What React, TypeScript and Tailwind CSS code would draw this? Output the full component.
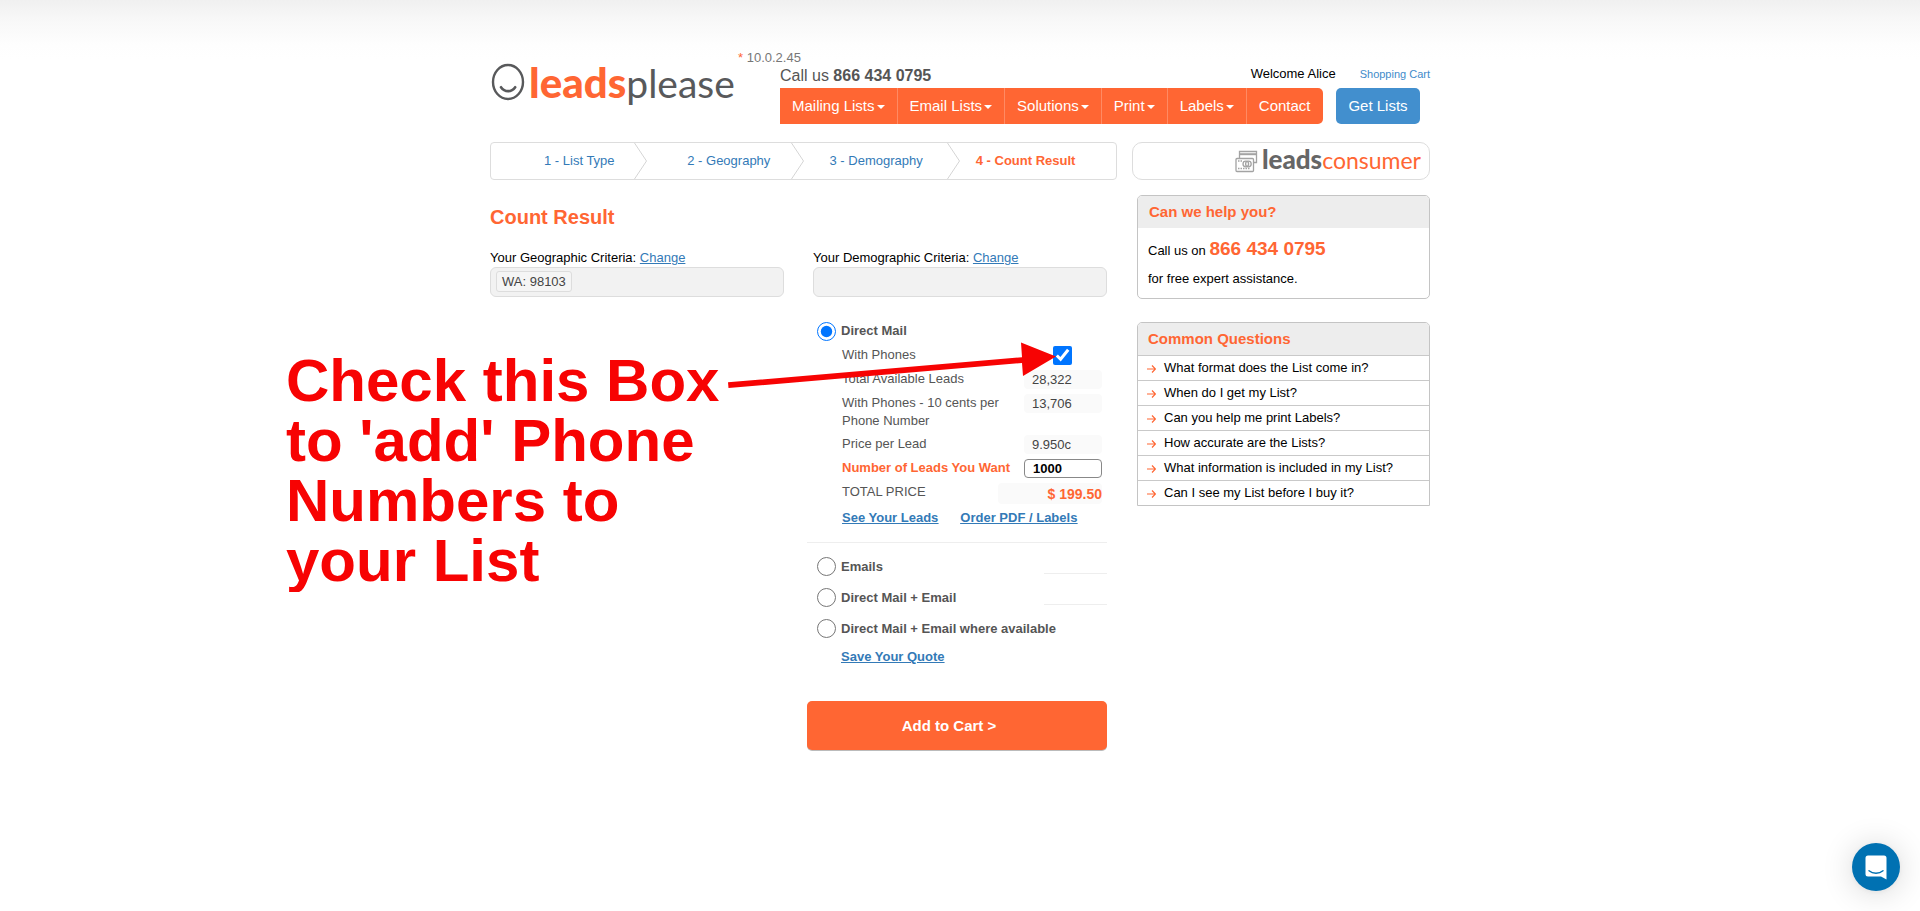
import type { ReactNode } from 'react';

const menu = [
  { label: 'Mailing Lists', caret: true },
  { label: 'Email Lists', caret: true },
  { label: 'Solutions', caret: true },
  { label: 'Print', caret: true },
  { label: 'Labels', caret: true },
  { label: 'Contact', caret: false },
];

const steps = [
  { label: '1 - List Type', pad: 'pl-[53px]' },
  { label: '2 - Geography', pad: 'pl-10' },
  { label: '3 - Demography', pad: 'pl-[26px]' },
  { label: '4 - Count Result', pad: 'pl-4' },
];

const questions = [
  'What format does the List come in?',
  'When do I get my List?',
  'Can you help me print Labels?',
  'How accurate are the Lists?',
  'What information is included in my List?',
  'Can I see my List before I buy it?',
];

const otherLists = [
  { id: 'emails', label: 'Emails', line: true },
  { id: 'mail-email', label: 'Direct Mail + Email', line: true },
  { id: 'mail-email-available', label: 'Direct Mail + Email where available', line: false },
];

function Logo() {
  return (
    <a href="#" className="flex h-[50px] items-start pl-px text-[#58595b]">
      <svg width="34" height="40" viewBox="0 0 34 40" fill="none" stroke="currentColor" className="mt-[5px]">
        <ellipse cx="17" cy="20" rx="15" ry="17" strokeWidth="2.4" />
        <path d="M10 25.2c3.6 5.2 10.6 5.2 14.2 0" strokeWidth="2.6" strokeLinecap="round" />
      </svg>
      <span className="pl-1 font-[Lato,sans-serif] leading-[50px]">
        <span className="text-[42px] font-black text-[#ff6633]">leads</span>
        <span className="text-[39px]">please</span>
      </span>
    </a>
  );
}

function ConsumerLogo() {
  return (
    <div className="flex h-[38px] items-center justify-end rounded-[10px] border border-[#ddd] pr-2">
      <svg width="23" height="23" viewBox="0 0 23 23" fill="none" stroke="#a3a3a3" strokeWidth="1.3">
        <path d="M4.500 8V1.500h17v11h-3" />
        <path d="M5 4.200h16" strokeWidth="2" />
        <rect x="1" y="8.500" width="17.500" height="13" rx="1" fill="#fff" />
        <circle cx="10.800" cy="14" r="2.800" />
        <circle cx="13.400" cy="14" r="2.800" />
        <path d="M3 11h4M3 18.500h12" strokeDasharray="1.500 1" />
      </svg>
      <span className="pl-1 font-[Lato,sans-serif] leading-9">
        <span className="text-[26px] font-black text-[#666]">leads</span>
        <span className="text-[23px] text-[#ff6633]">consumer</span>
      </span>
    </div>
  );
}

function Row({ label, children }: { label: string; children: ReactNode }) {
  return (
    <div className="flex h-6 items-start justify-between leading-6">
      <span>{label}</span>
      {children}
    </div>
  );
}

function Value({ children }: { children: ReactNode }) {
  return (
    <span className="mt-[3px] h-[19px] w-[78px] shrink-0 rounded bg-[#fafafa] pl-2 leading-[20px] text-[#444]">
      {children}
    </span>
  );
}

function Criteria({ title, children }: { title: string; children?: ReactNode }) {
  return (
    <div>
      <p className="text-black">
        {title}{' '}
        <a href="#" className="text-[#337ab7] underline">
          Change
        </a>
      </p>
      <div className="flex h-[30px] items-start rounded-md border border-[#ddd] bg-[#f2f2f2] px-[5px] pt-[3px]">
        {children}
      </div>
    </div>
  );
}

export default function App() {
  return (
    <div className="min-h-screen bg-white bg-[linear-gradient(#f0f0f0,#f7f7f7_18px,#fefefe_45px,#fff_60px)] font-['Liberation_Sans',Arial,sans-serif] text-[13px] leading-[18px]">
      <div className="relative mx-auto w-full max-w-[940px]">
        <header className="flex">
          <div className="w-[248px] shrink-0 pt-[57px]">
            <Logo />
          </div>
          <div className="flex-1 pt-[50px]">
            <p className="leading-4 text-[#777]">
              <span className="text-[#ff6633]">*</span> 10.0.2.45
            </p>
            <div className="flex h-[22px] items-start pl-[42px] leading-4">
              <p className="mr-auto text-base leading-5 text-[#555]">
                Call us <b>866 434 0795</b>
              </p>
              <span className="text-black">Welcome Alice</span>
              <a href="#" className="ml-6 text-[11px] text-[#428bca]">
                Shopping Cart
              </a>
            </div>
            <div className="flex items-center justify-between pr-2.5 pl-[42px] text-[15px] text-white">
              <nav className="flex h-9 overflow-hidden rounded-r-[5px] bg-[#ff6633]">
                {menu.map((item) => (
                  <a
                    key={item.label}
                    href="#"
                    className="flex items-center gap-0.5 border-r border-[#ff8a63] px-3 last:border-0"
                  >
                    {item.label}
                    {item.caret && (
                      <svg width="8" height="4" viewBox="0 0 8 4" fill="currentColor" className="mt-0.5">
                        <path d="M0 0h8L4 4z" />
                      </svg>
                    )}
                  </a>
                ))}
              </nav>
              <button type="button" className="h-9 w-[84px] rounded-[5px] bg-[#428fce]">
                Get Lists
              </button>
            </div>
          </div>
        </header>

        <div className="mt-[18px] flex gap-[15px]">
          <main className="flex-1">
            <ol className="grid h-[38px] grid-cols-4 rounded-sm border border-[#ddd] text-[#337ab7]">
              {steps.map((step, i) => (
                <li key={step.label} className={`flex items-center justify-between ${step.pad}`}>
                  {i < 3 ? (
                    <>
                      <a href="#">{step.label}</a>
                      <svg width="13" height="36" viewBox="0 0 13 36" fill="none" stroke="#d5d5d5">
                        <path d="M.5 0l12 18-12 18" />
                      </svg>
                    </>
                  ) : (
                    <b className="text-[#ff6633]">{step.label}</b>
                  )}
                </li>
              ))}
            </ol>

            <h1 className="mt-[23px] text-xl leading-7 font-bold text-[#ff6633]">Count Result</h1>

            <div className="mt-[18px] grid grid-cols-2 gap-x-[29px] pr-2.5">
              <Criteria title="Your Geographic Criteria:">
                <span className="h-[21px] rounded-[3px] border border-[#ddd] bg-[#f5f5f5] px-[5px] leading-[20px] text-[#444]">
                  WA: 98103
                </span>
              </Criteria>
              <Criteria title="Your Demographic Criteria:" />

              <form className="col-start-2 mt-[22px] -ml-1.5 text-[#555]">
                <div className="flex h-6 items-start pl-2.5">
                  <input
                    id="direct-mail"
                    type="radio"
                    name="list"
                    defaultChecked
                    className="mt-[3px] size-[19px] accent-[#0075ff]"
                  />
                  <label htmlFor="direct-mail" className="pl-[5px] leading-6 font-bold">
                    Direct Mail
                  </label>
                </div>
                <div className="pr-[5px] pl-[35px]">
                  <div className="flex h-6 items-start justify-between leading-6">
                    <label htmlFor="phones">With Phones</label>
                    <input
                      id="phones"
                      type="checkbox"
                      defaultChecked
                      className="mt-[3px] mr-[30px] size-[19px] accent-[#0075ff]"
                    />
                  </div>
                  <Row label="Total Available Leads">
                    <Value>28,322</Value>
                  </Row>
                  <div className="flex h-[41px] items-start justify-between">
                    <span className="w-[165px] pt-[3px]">With Phones - 10 cents per Phone Number</span>
                    <Value>13,706</Value>
                  </div>
                  <Row label="Price per Lead">
                    <Value>9.950c</Value>
                  </Row>
                  <div className="flex h-6 items-start justify-between leading-6">
                    <label htmlFor="count" className="font-bold text-[#ff6633]">
                      Number of Leads You Want
                    </label>
                    <input
                      id="count"
                      type="text"
                      defaultValue="1000"
                      className="mt-[3px] h-[19px] w-[78px] rounded border border-[#888] bg-white pl-2 font-bold text-black"
                    />
                  </div>
                  <div className="flex h-[26px] items-start justify-between leading-6">
                    <span>TOTAL PRICE</span>
                    <b className="mt-[3px] h-[21px] w-[104px] rounded bg-[#fafafa] text-right text-sm leading-[22px] text-[#ff6633]">
                      $ 199.50
                    </b>
                  </div>
                  <div className="flex gap-[22px] pb-3 leading-6 font-bold text-[#337ab7] underline">
                    <a href="#">See Your Leads</a>
                    <a href="#">Order PDF / Labels</a>
                  </div>
                </div>
                <div className="border-t border-[#eee] pt-2">
                  {otherLists.map((item) => (
                    <div key={item.id} className="flex h-[31px] items-center pl-2.5">
                      <input id={item.id} type="radio" name="list" className="size-[19px]" />
                      <label htmlFor={item.id} className="pl-[5px] font-bold">
                        {item.label}
                      </label>
                      {item.line && (
                        <span className="ml-auto h-[23px] w-[63px] self-start border-b border-[#eee]" />
                      )}
                    </div>
                  ))}
                  <p className="pl-[34px] leading-[26px] font-bold">
                    <a href="#" className="text-[#337ab7] underline">
                      Save Your Quote
                    </a>
                  </p>
                </div>
                <button
                  type="button"
                  className="mt-[31px] h-[49px] w-full rounded-[5px] bg-[#ff6633] pr-4 text-[15px] font-bold text-white shadow-[0_1px_0_#bbb]"
                >
                  Add to Cart &gt;
                </button>
              </form>
            </div>
          </main>

          <aside className="w-[298px] shrink-0 text-black">
            <ConsumerLogo />
            <section className="mt-[15px] ml-[5px] h-[104px] overflow-hidden rounded-[5px] border border-[#c4c4c4]">
              <h2 className="bg-[#ededed] px-[11px] text-[15px] leading-8 font-bold text-[#ff6633]">
                Can we help you?
              </h2>
              <p className="px-2.5 pt-[7px] leading-7">
                Call us on <b className="text-[19px] text-[#ff6633]">866 434 0795</b>
                <br />
                for free expert assistance.
              </p>
            </section>
            <section className="mt-[23px] ml-[5px] overflow-hidden rounded-t-[5px] border border-[#c4c4c4]">
              <h2 className="bg-[#ededed] px-2.5 text-[15px] leading-8 font-bold text-[#ff6633]">
                Common Questions
              </h2>
              <ul>
                {questions.map((q) => (
                  <li key={q} className="border-t border-[#c9c9c9]">
                    <a href="#" className="flex h-6 items-center gap-2 pl-[9px]">
                      <svg width="9" height="9" viewBox="0 0 9 9" fill="none" stroke="#ff6633" strokeWidth="1.2">
                        <path d="M0 5h8.500M5 1.500L8.500 5 5 8.500" />
                      </svg>
                      {q}
                    </a>
                  </li>
                ))}
              </ul>
            </section>
          </aside>
        </div>

        {/* callout drawn over the form */}
        <p className="absolute top-[351px] -left-[204px] h-[241px] overflow-hidden text-[60px] leading-[60px] font-bold whitespace-nowrap text-[#f70303]">
          Check this Box
          <br />
          to 'add' Phone
          <br />
          Numbers to
          <br />
          your List
        </p>
        <svg
          width="330"
          height="50"
          viewBox="0 0 330 50"
          fill="#f70303"
          className="pointer-events-none absolute top-[342px] left-[238px]"
        >
          <path d="M0 40.300L294 15.200 293 .5 328 14.500 295 34l-1-13L.5 46z" />
        </svg>
      </div>

      <button
        type="button"
        aria-label="Open chat"
        className="fixed right-5 bottom-5 flex size-12 items-center justify-center rounded-full bg-[#0071b2] shadow-[0_1px_6px_rgba(0,0,0,0.06),0_2px_32px_rgba(0,0,0,0.16)]"
      >
        <svg width="22" height="25" viewBox="0 0 22 25" fill="none">
          <path d="M3 .5h16a2.500 2.500 0 0 1 2.500 2.500v21.500l-5.500-3H3A2.500 2.500 0 0 1 .5 19V3A2.500 2.500 0 0 1 3 .5z" fill="#fff" />
          <path d="M4 15.700c4 3.300 10 3.300 14 0" stroke="#0071b2" strokeWidth="1.400" strokeLinecap="round" />
        </svg>
      </button>
    </div>
  );
}
